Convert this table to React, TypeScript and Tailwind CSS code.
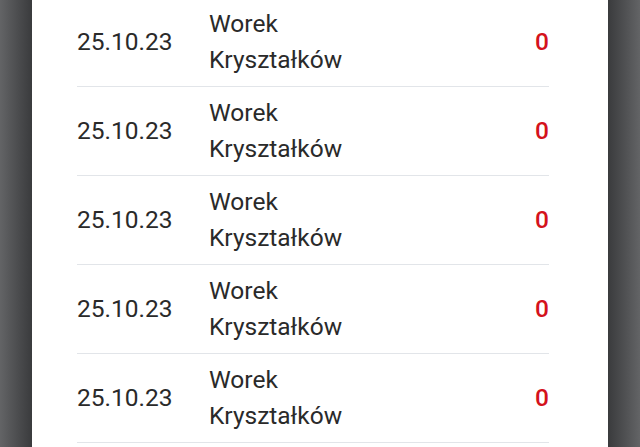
const rows = Array.from({ length: 5 }).map(() => ({
  date: "25.10.23",
  name: "Worek Kryształków",
  amount: 0,
}));

export default function App() {
  return (
    <div className="flex h-[447px] w-[640px] overflow-hidden bg-[#4a4b4d] font-['Roboto',sans-serif]">
      <div className="w-[32px] shrink-0 bg-gradient-to-r from-[#636466] to-[#3a3b3d]" />
      <div className="w-[576px] shrink-0 bg-white pl-[45px] pr-[59px]">
        <div className="-mt-[2px]">
          {rows.map((row, index) => (
            <div
              key={index}
              className="flex h-[89px] items-center border-b border-[#e2e5e9] text-[24.5px] text-[#2a2a2a]"
            >
              <div className="w-[132px] shrink-0 leading-none">{row.date}</div>
              <div className="flex-1 leading-[36px]">
                <div>Worek</div>
                <div>Kryształków</div>
              </div>
              <div className="font-medium leading-none text-[#d4121c]">{row.amount}</div>
            </div>
          ))}
        </div>
      </div>
      <div className="w-[32px] shrink-0 bg-gradient-to-r from-[#3a3b3d] to-[#636466]" />
    </div>
  );
}
